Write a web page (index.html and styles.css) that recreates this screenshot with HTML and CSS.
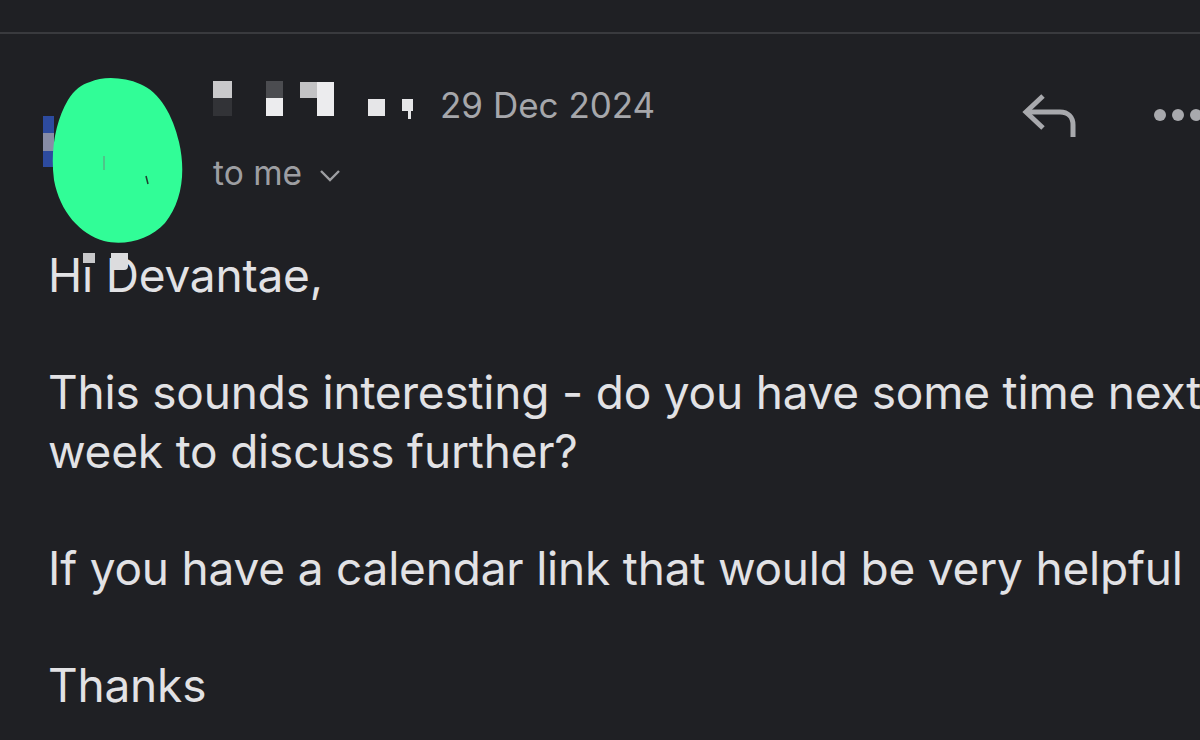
FILE: index.html
```html
<!DOCTYPE html>
<html lang="en">
<head>
<meta charset="utf-8">
<title>Email</title>
<link rel="stylesheet" href="styles.css">
</head>
<body>
<div class="page">
  <div class="topbar"></div>
  <div class="header">
    <svg class="avatar" width="150" height="168" viewBox="40 78 150 168">
      <rect x="43" y="116" width="11" height="17" fill="#2d4b9f"/>
      <rect x="43" y="133" width="11" height="18" fill="#878ca6"/>
      <rect x="43" y="151" width="11" height="16" fill="#2d4b9f"/>
      <path d="M90 82 C103 76 124 77 140 84 C160 92 173 116 179 142 C186 172 182 202 165 223 C150 240 124 246 104 241 C80 234 60 212 54 180 C50 150 56 120 68 100 C74 90 82 84 90 82 Z" fill="#31fd97"/>
      <path d="M104 156 L104 170" stroke="#6b8f7d" stroke-width="1"/>
      <path d="M146 176 L148 184" stroke="#1f4030" stroke-width="1.5"/>
    </svg>
    <div class="meta">
      <div class="from-row">
        <svg class="name-blocks" width="200" height="40" viewBox="0 0 200 40">
          <rect x="0" y="1" width="19" height="17" fill="#c9c9cb"/>
          <rect x="0" y="18" width="19" height="18" fill="#323337"/>
          <rect x="53" y="1" width="17" height="17" fill="#4b4c50"/>
          <rect x="53" y="18" width="17" height="18" fill="#ececee"/>
          <rect x="87" y="2" width="17" height="16" fill="#c2c2c4"/>
          <rect x="104" y="2" width="17" height="34" fill="#ececee"/>
          <rect x="155" y="19" width="17" height="17" fill="#e6e6e8"/>
          <rect x="189" y="19" width="11" height="12" fill="#e6e6e8"/>
          <rect x="195" y="30" width="3" height="9" fill="#e6e6e8"/>
        </svg>
        <span class="date">29 Dec 2024</span>
      </div>
      <div class="to-row">
        <span class="to">to me</span>
        <svg class="chev" width="22" height="14" viewBox="0 0 22 14">
          <path d="M2 3 L11 12 L20 3" fill="none" stroke="#9d9ea2" stroke-width="2.4"/>
        </svg>
      </div>
    </div>
    <div class="actions">
      <svg class="reply" width="60" height="48" viewBox="1018 92 60 48">
        <path d="M1043 96 L1026 112 L1043 128" fill="none" stroke="#a8a9ad" stroke-width="5"/>
        <path d="M1026 112 L1060 112 C1068 112 1073 117 1073 125 L1073 137" fill="none" stroke="#a8a9ad" stroke-width="5"/>
      </svg>
      <svg class="more" width="60" height="14" viewBox="0 0 60 14">
        <circle cx="10" cy="7" r="6" fill="#a8a9ad"/>
        <circle cx="28" cy="7" r="6" fill="#a8a9ad"/>
        <circle cx="46" cy="7" r="6" fill="#a8a9ad"/>
      </svg>
    </div>
  </div>
  <div class="message">
    <p class="greeting">Hi Devantae,<span class="px px-a"></span><span class="px px-b"></span></p>
    <p>This sounds interesting - do you have some time next week to discuss further?</p>
    <p>If you have a calendar link that would be very helpful</p>
    <p>Thanks</p>
  </div>
</div>
</body>
</html>
```

FILE: styles.css
```css
html, body {
  margin: 0;
  padding: 0;
  background: #1f2024;
  overflow: hidden;
}
body {
  width: 1200px;
  height: 740px;
  font-family: "Inter", "Liberation Sans", sans-serif;
}
.page {
  width: 1260px;
}
.topbar {
  height: 32px;
  border-bottom: 2px solid #393a3e;
}
.header {
  display: flex;
  align-items: flex-start;
  padding: 44px 0 0 40px;
}
.avatar {
  display: block;
  flex: none;
}
.meta {
  margin-left: 23px;
  padding-top: 2px;
  display: flex;
  flex-direction: column;
}
.from-row {
  display: flex;
  align-items: flex-start;
  height: 40px;
}
.name-blocks {
  display: block;
  flex: none;
}
.date {
  margin-left: 27px;
  margin-top: 5px;
  font-size: 35px;
  line-height: 40px;
  color: #a6a7ab;
}
.to-row {
  display: flex;
  align-items: center;
  margin-top: 33px;
}
.to {
  font-size: 33.5px;
  line-height: 40px;
  color: #9d9ea2;
}
.chev {
  display: block;
  margin-left: 17px;
  margin-top: 4px;
}
.actions {
  margin-left: auto;
  margin-right: 50px;
  display: flex;
  align-items: flex-start;
}
.reply {
  display: block;
  margin-top: 14px;
}
.more {
  display: block;
  margin-left: 72px;
  margin-top: 30px;
}
.message {
  padding-left: 48px;
  width: 1190px;
  color: #e2e2e5;
  font-size: 46px;
  letter-spacing: -0.2px;
  line-height: 58.5px;
}
.message p {
  margin: 0 0 58.5px 0;
}
.greeting {
  position: relative;
}
.px {
  position: absolute;
  background: #dcdcde;
}
.px-a {
  left: 35px;
  top: 7px;
  width: 12px;
  height: 10px;
  background: #c8c8ca;
}
.px-b {
  left: 63px;
  top: 7px;
  width: 17px;
  height: 17px;
  border-bottom-right-radius: 4px;
}
```
